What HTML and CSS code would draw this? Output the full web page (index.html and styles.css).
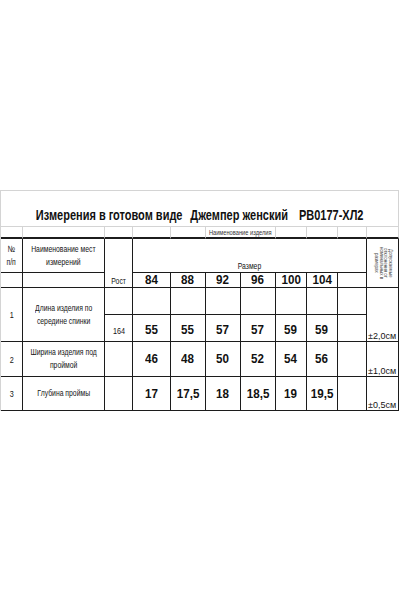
FILE: index.html
```html
<!DOCTYPE html>
<html lang="ru">
<head>
<meta charset="utf-8">
<title>Измерения в готовом виде</title>
<link rel="stylesheet" href="styles.css">
</head>
<body>
<div class="page">
  <div class="sheet">
    <div class="cell g title span11"><span class="tt"><span>Измерения в готовом виде</span><span class="gap1">Джемпер женский</span><span class="gap2">РВ0177-ХЛ2</span></span></div>

    <div class="cell g sub"></div>
    <div class="cell g sub"></div>
    <div class="cell g sub"></div>
    <div class="cell g sub"></div>
    <div class="cell g sub"></div>
    <div class="cell g sub span2 prod"><span class="sq">Наименование изделия</span></div>
    <div class="cell g sub"></div>
    <div class="cell g sub"></div>
    <div class="cell g sub"></div>
    <div class="cell g sub"></div>

    <div class="cell lbl"><span class="sq">№<br>п/п</span></div>
    <div class="cell lbl"><span class="sq">Наименование мест<br>измерений</span></div>
    <div class="cell rows2 bottom rost"><span class="sq">Рост</span></div>
    <div class="cell span7 bottom razmer"><span class="sq">Размер</span></div>
    <div class="cell rows2 tolh"><div class="rot">Допускаемые<br>отклонения от<br>номинальных в<br>размерах</div></div>

    <div class="cell"></div>
    <div class="cell"></div>
    <div class="cell num"><span class="nq">84</span></div>
    <div class="cell num"><span class="nq">88</span></div>
    <div class="cell num"><span class="nq">92</span></div>
    <div class="cell num"><span class="nq">96</span></div>
    <div class="cell num"><span class="nq">100</span></div>
    <div class="cell num"><span class="nq">104</span></div>
    <div class="cell"></div>

    <div class="cell rows2 idx"><span class="sq">1</span></div>
    <div class="cell rows2 lbl"><span class="sq">Длина изделия по<br>середине спинки</span></div>
    <div class="cell"></div>
    <div class="cell"></div>
    <div class="cell"></div>
    <div class="cell"></div>
    <div class="cell"></div>
    <div class="cell"></div>
    <div class="cell"></div>
    <div class="cell"></div>
    <div class="cell rows2 tol">±2,0см</div>

    <div class="cell idx low"><span class="sq">164</span></div>
    <div class="cell num low"><span class="nq">55</span></div>
    <div class="cell num low"><span class="nq">55</span></div>
    <div class="cell num low"><span class="nq">57</span></div>
    <div class="cell num low"><span class="nq">57</span></div>
    <div class="cell num low"><span class="nq">59</span></div>
    <div class="cell num low"><span class="nq">59</span></div>
    <div class="cell"></div>

    <div class="cell idx"><span class="sq">2</span></div>
    <div class="cell lbl"><span class="sq">Ширина изделия под<br>проймой</span></div>
    <div class="cell"></div>
    <div class="cell num"><span class="nq">46</span></div>
    <div class="cell num"><span class="nq">48</span></div>
    <div class="cell num"><span class="nq">50</span></div>
    <div class="cell num"><span class="nq">52</span></div>
    <div class="cell num"><span class="nq">54</span></div>
    <div class="cell num"><span class="nq">56</span></div>
    <div class="cell"></div>
    <div class="cell tol">±1,0см</div>

    <div class="cell idx"><span class="sq">3</span></div>
    <div class="cell lbl"><span class="sq">Глубина проймы</span></div>
    <div class="cell"></div>
    <div class="cell num"><span class="nq">17</span></div>
    <div class="cell num"><span class="nq">17,5</span></div>
    <div class="cell num"><span class="nq">18</span></div>
    <div class="cell num"><span class="nq">18,5</span></div>
    <div class="cell num"><span class="nq">19</span></div>
    <div class="cell num"><span class="nq">19,5</span></div>
    <div class="cell"></div>
    <div class="cell tol">±0,5см</div>
  </div>
</div>
</body>
</html>
```
FILE: styles.css
```css
html, body {
  margin: 0;
  padding: 0;
  background: #ffffff;
}

.page {
  padding-top: 190px;
}

.sheet {
  display: grid;
  grid-template-columns: 22px 82px 28px 38px 35px 35px 35px 31px 31px 29px 32px;
  grid-template-rows: 36px 12px 34px 15px 27px 27px 35px 34px;
  width: 399px;
  box-sizing: border-box;
  border-top: 1px solid #d4d4d4;
  border-left: 1px solid #d4d4d4;
  font-family: "Liberation Sans", Arial, sans-serif;
  color: #151515;
}

.cell {
  box-sizing: border-box;
  border-right: 1px solid #1c1c1c;
  border-bottom: 1px solid #1c1c1c;
  display: flex;
  align-items: center;
  justify-content: center;
  text-align: center;
  white-space: nowrap;
  font-size: 9px;
  line-height: 13px;
  min-width: 0;
}

.cell.g {
  border-right-color: #d4d4d4;
  border-bottom-color: #d4d4d4;
}

.cell.sub {
  border-bottom: 2px solid #1c1c1c;
}

.span11 { grid-column: span 11; }
.span7 { grid-column: span 7; }
.span2 { grid-column: span 2; }
.rows2 { grid-row: span 2; }

.bottom {
  align-items: flex-end;
}

.sq {
  display: inline-block;
  transform: scaleX(0.76);
}

.nq {
  display: inline-block;
  transform: scaleX(0.86);
}

.title {
  align-items: flex-end;
  padding-bottom: 4px;
  font-weight: bold;
  font-size: 14px;
  line-height: 14px;
  color: #111;
}

.tt {
  display: inline-block;
  flex: none;
  transform: scaleX(0.785);
}

.title .gap1 { margin-left: 10px; }
.title .gap2 { margin-left: 14px; }

.prod {
  font-size: 7.5px;
  line-height: 9px;
  color: #333;
}

.lbl {
  font-size: 9px;
  line-height: 13px;
}

.rost,
.razmer {
  font-size: 9px;
  line-height: 11px;
}

.num {
  font-weight: bold;
  font-size: 13.5px;
  line-height: 14px;
  color: #111;
}

.idx {
  font-size: 9.5px;
}

.low {
  padding-top: 4px;
}

.tol {
  align-items: flex-end;
  justify-content: flex-start;
  font-size: 9px;
  line-height: 10px;
  padding-left: 1px;
}

.rot {
  writing-mode: vertical-rl;
  font-size: 4.5px;
  line-height: 4.5px;
  color: #444;
  text-align: center;
}
```
